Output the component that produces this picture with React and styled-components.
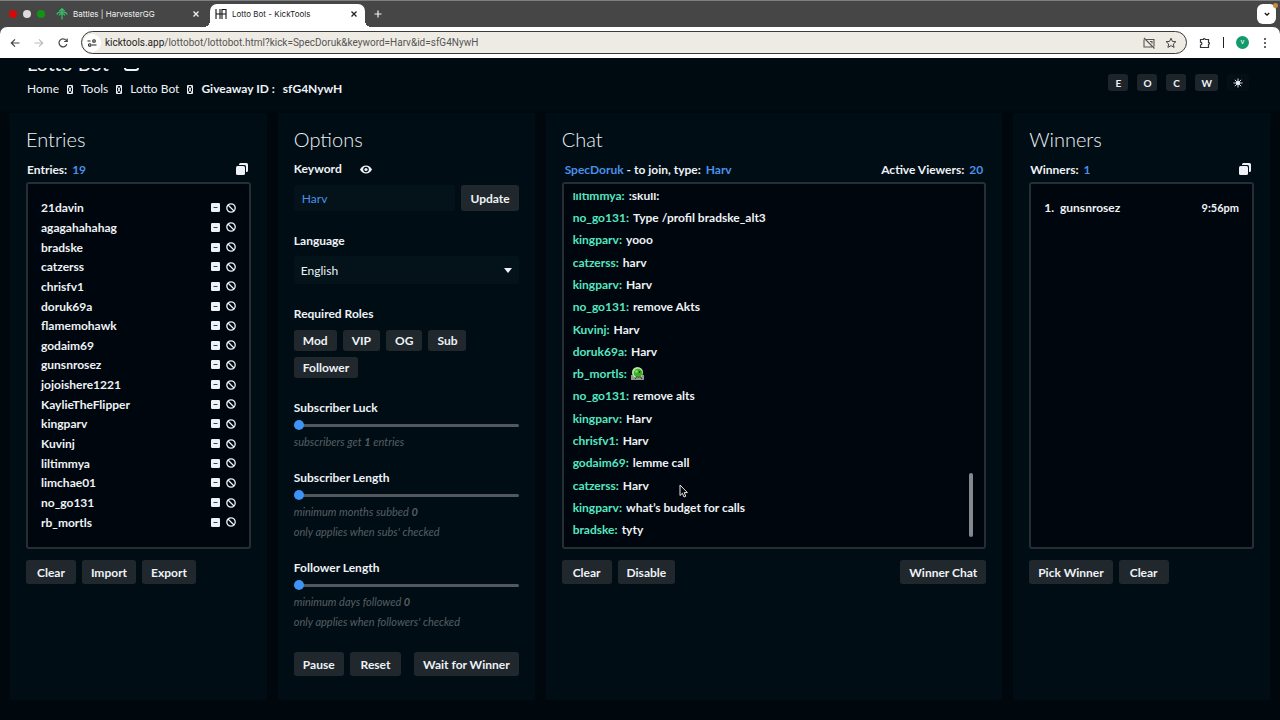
import React, { useState } from 'react';
import styled, { createGlobalStyle } from 'styled-components';

const entries = [
  '21davin', 'agagahahahag', 'bradske', 'catzerss', 'chrisfv1', 'doruk69a',
  'flamemohawk', 'godaim69', 'gunsnrosez', 'jojoishere1221', 'KaylieTheFlipper',
  'kingparv', 'Kuvinj', 'liltimmya', 'limchae01', 'no_go131', 'rb_mortls',
];

const messages = [
  { user: 'liltimmya', text: ':skull:' },
  { user: 'no_go131', text: 'Type /profil bradske_alt3' },
  { user: 'kingparv', text: 'yooo' },
  { user: 'catzerss', text: 'harv' },
  { user: 'kingparv', text: 'Harv' },
  { user: 'no_go131', text: 'remove Akts' },
  { user: 'Kuvinj', text: 'Harv' },
  { user: 'doruk69a', text: 'Harv' },
  { user: 'rb_mortls', emote: true },
  { user: 'no_go131', text: 'remove alts' },
  { user: 'kingparv', text: 'Harv' },
  { user: 'chrisfv1', text: 'Harv' },
  { user: 'godaim69', text: 'lemme call' },
  { user: 'catzerss', text: 'Harv' },
  { user: 'kingparv', text: 'what’s budget for calls' },
  { user: 'bradske', text: 'tyty' },
];

const roles = ['Mod', 'VIP', 'OG', 'Sub', 'Follower'];
const shortcuts = ['E', 'O', 'C', 'W'];

const CloseIcon = () => (
  <svg width="8" height="8" viewBox="0 0 8 8" fill="none" stroke="currentColor" strokeWidth="1.3">
    <path d="M1.5 1.5l5 5M6.5 1.5l-5 5" />
  </svg>
);

const HarvesterLogo = () => (
  <svg width="12" height="12" viewBox="0 0 12 12" fill="none" stroke="#35c46a" strokeWidth="1.2">
    <path d="M6 1v10.500M3.500 3L6 .8 8.500 3M.8 6.500C1.500 4.500 3 3.800 6 3.800s4.500.7 5.200 2.700M3.200 7.500C3.500 6 4.500 5.600 6 5.600s2.500.4 2.800 1.900" />
  </svg>
);

const KickToolsLogo = () => (
  <svg width="12" height="12" viewBox="0 0 12 12" fill="none" stroke="#111" strokeWidth="1.1">
    <path d="M1 1v10M5 1v10M7 1v10M11 1v10M1 6h10M7 1.500h4" />
  </svg>
);

const BackIcon = () => (
  <svg width="12" height="12" viewBox="0 0 12 12" fill="none" stroke="currentColor" strokeWidth="1.2">
    <path d="M10.500 6h-8M6 2.300L2.300 6 6 9.700" />
  </svg>
);

const ForwardIcon = () => (
  <svg width="12" height="12" viewBox="0 0 12 12" fill="none" stroke="currentColor" strokeWidth="1.2">
    <path d="M1.500 6h8M6 2.300L9.700 6 6 9.700" />
  </svg>
);

const ReloadIcon = () => (
  <svg width="12" height="12" viewBox="0 0 12 12" fill="none" stroke="currentColor" strokeWidth="1.2">
    <path d="M9.800 7.200A4 4 0 1 1 9 3.200L10 4.400" />
    <path d="M10.200 1.500v3h-3" />
  </svg>
);

const TuneIcon = () => (
  <svg width="10" height="10" viewBox="0 0 10 10" fill="none" stroke="#222" strokeWidth="1.1">
    <path d="M.5 3h3M5 7h4.500" />
    <circle cx="7" cy="3" r="1.300" />
    <circle cx="2.800" cy="7" r="1.300" />
  </svg>
);

const NoCastIcon = () => (
  <svg width="12" height="12" viewBox="0 0 12 12" fill="none" stroke="#555" strokeWidth="1.1">
    <path d="M3.500 2.500h7.500v7M9 10H1V2.500M1 1l10.500 10.500M7 4.500h2v2" />
  </svg>
);

const StarIcon = () => (
  <svg width="12" height="12" viewBox="0 0 12 12" fill="none" stroke="#444" strokeWidth="1">
    <path d="M6 1.200l1.400 3.200 3.500.3-2.600 2.300.8 3.400L6 8.600l-3.100 1.800.8-3.400L1.100 4.700l3.500-.3z" />
  </svg>
);

const PuzzleIcon = () => (
  <svg width="12" height="12" viewBox="0 0 12 12" fill="none" stroke="#333" strokeWidth="1.200">
    <path d="M1.500 2.500H4.300a1 1 0 0 1 2 0H9.500V5.300a1 1 0 0 1 0 2V10.500H1.500V8a1.400 1.400 0 0 0 0-2.800z" />
  </svg>
);

const DotsIcon = () => (
  <svg width="8" height="12" viewBox="0 0 8 12" fill="#333">
    <circle cx="4" cy="2" r="1" />
    <circle cx="4" cy="6" r="1" />
    <circle cx="4" cy="10" r="1" />
  </svg>
);

// separator glyph between breadcrumb items
const CrumbSeparator = () => (
  <svg width="6" height="9" viewBox="0 0 6 9" fill="none" stroke="currentColor" strokeWidth="1" aria-hidden="true">
    <path d="M.5 .5h5v8h-5zM1 1l4 7M5 1L1 8" />
  </svg>
);

const CopyIcon = () => (
  <svg width="12" height="12" viewBox="0 0 12 12" fill="currentColor">
    <rect x="0" y="3" width="9" height="9" rx="1.500" />
    <path d="M3 2V1.500Q3 0 4.500 0h6Q12 0 12 1.500v6Q12 9 10.500 9H10V3.500Q10 2 8.500 2z" />
  </svg>
);

const EyeIcon = () => (
  <svg width="12" height="9" viewBox="0 0 12 9" fill="none">
    <path d="M0 4.500C1.300 1.800 3.500 .4 6 .4s4.700 1.400 6 4.100C10.700 7.200 8.500 8.600 6 8.600S1.300 7.200 0 4.500z" fill="currentColor" />
    <circle cx="6" cy="4.500" r="2.800" fill="#010c13" />
    <circle cx="6" cy="4.500" r="1.600" fill="currentColor" />
  </svg>
);

const MinusIcon = () => (
  <svg width="9" height="9" viewBox="0 0 9 9">
    <rect width="9" height="9" rx="1.300" fill="currentColor" />
    <path d="M2.500 4.500h4" stroke="#3a4250" strokeWidth="1" />
  </svg>
);

const BanIcon = () => (
  <svg width="10" height="10" viewBox="0 0 10 10" fill="none" stroke="currentColor" strokeWidth="1.300">
    <circle cx="5" cy="5" r="4.200" />
    <path d="M2 2l6 6" />
  </svg>
);

const SunIcon = () => (
  <svg width="10" height="10" viewBox="0 0 10 10" fill="none" stroke="currentColor" strokeWidth="0.900">
    <circle cx="5" cy="5" r="2" fill="currentColor" stroke="none" />
    <path d="M5 .5v9M.5 5h9M1.800 1.800l6.400 6.400M8.200 1.800L1.800 8.200" />
  </svg>
);

const FrogEmote = () => (
  <svg width="13" height="13" viewBox="0 0 13 13" role="img" aria-label="frog">
    <rect x="0" y="8" width="13" height="5" fill="#8f9a8c" />
    <circle cx="6.500" cy="5.500" r="5.500" fill="#b9e8a0" />
    <circle cx="7" cy="6" r="4.300" fill="#3fae2c" />
    <circle cx="5.500" cy="4.500" r="1.300" fill="#86e05a" />
    <circle cx="8.600" cy="5" r=".9" fill="#14480f" />
    <path d="M4 12l2-2.500 1.500 1.500L9 9.500l2 2.500" stroke="#2c3a2a" fill="none" />
  </svg>
);

const SliderOption = ({ id, label, hint, value, note }) => {
  const [amount, setAmount] = useState(value);

  return (
    <div>
      <Label htmlFor={id}>{label}</Label>
      <Slider
        id={id}
        type="range"
        min={value}
        max="100"
        value={amount}
        onChange={(e) => setAmount(Number(e.target.value))}
      />
      <Hint>{hint} <b>{amount}</b>{id === 'luck' ? ' entries' : ''}</Hint>
      {note && <Hint>{note}</Hint>}
    </div>
  );
};

const Browser = () => (
  <header>
    <TabStrip>
      <Lights>
        <Light color="#d40a0a" />
        <Light color="#dcdcdc" />
        <Light color="#129312" />
      </Lights>
      <Tab>
        <HarvesterLogo />
        <TabTitle>Battles | HarvesterGG</TabTitle>
        <IconButton aria-label="Close tab"><CloseIcon /></IconButton>
      </Tab>
      <Tab $active>
        <KickToolsLogo />
        <TabTitle>Lotto Bot - KickTools</TabTitle>
        <IconButton aria-label="Close tab"><CloseIcon /></IconButton>
      </Tab>
      <NewTab aria-label="New tab">
        <svg width="8" height="8" viewBox="0 0 8 8" stroke="currentColor" strokeWidth="1.200"><path d="M4 .5v7M.5 4h7" /></svg>
      </NewTab>
      <TabSearch aria-label="Search tabs">
        <svg width="8" height="8" viewBox="0 0 8 8" fill="none" stroke="#111" strokeWidth="1.300"><path d="M1.800 3L4 5.200 6.200 3" /></svg>
        <UpdateDot />
      </TabSearch>
    </TabStrip>
    <Toolbar>
      <IconButton aria-label="Back"><BackIcon /></IconButton>
      <IconButton aria-label="Forward" $faded><ForwardIcon /></IconButton>
      <IconButton aria-label="Reload"><ReloadIcon /></IconButton>
      <AddressBar>
        <SiteInfo><TuneIcon /></SiteInfo>
        <Url><b>kicktools.app</b>/lottobot/lottobot.html?kick=SpecDoruk&amp;keyword=Harv&amp;id=sfG4NywH</Url>
        <NoCastIcon />
        <StarIcon />
      </AddressBar>
      <ToolbarEnd>
        <PuzzleIcon />
        <Divider />
        <Avatar>v</Avatar>
        <DotsIcon />
      </ToolbarEnd>
    </Toolbar>
  </header>
);

const App = () => {
  const [keyword, setKeyword] = useState('Harv');

  return (
    <Page>
      <GlobalStyle />
      <Browser />
      <PageHeader>
        <div>
          <TitleClip>
            <PageTitle>Lotto Bot</PageTitle>
            <TitleIcon />
          </TitleClip>
          <Breadcrumbs>
            <a href="#home">Home</a>
            <CrumbSeparator />
            <a href="#tools">Tools</a>
            <CrumbSeparator />
            <a href="#lottobot">Lotto Bot</a>
            <CrumbSeparator />
            <b>Giveaway ID :</b>
            <b>sfG4NywH</b>
          </Breadcrumbs>
        </div>
        <Shortcuts>
          {shortcuts.map((key) => <ShortcutButton key={key}>{key}</ShortcutButton>)}
          <ShortcutButton $quiet aria-label="Toggle theme"><SunIcon /></ShortcutButton>
        </Shortcuts>
      </PageHeader>

      <Panels>
        <Panel>
          <PanelTitle>Entries</PanelTitle>
          <InfoRow>
            <span>Entries: <Blue>19</Blue></span>
            <IconButton aria-label="Copy entries"><CopyIcon /></IconButton>
          </InfoRow>
          <Box>
            <EntryList>
              {entries.map((name) => (
                <Entry key={name}>
                  <EntryName>{name}</EntryName>
                  <IconButton aria-label={`Remove ${name}`}><MinusIcon /></IconButton>
                  <IconButton aria-label={`Ban ${name}`}><BanIcon /></IconButton>
                </Entry>
              ))}
            </EntryList>
          </Box>
          <ButtonRow>
            <Button $wide>Clear</Button>
            <Button>Import</Button>
            <Button>Export</Button>
          </ButtonRow>
        </Panel>

        <Panel>
          <PanelTitle>Options</PanelTitle>
          <Options>
            <div>
              <KeywordLabel>
                <Label htmlFor="keyword">Keyword</Label>
                <IconButton aria-label="Show keyword"><EyeIcon /></IconButton>
              </KeywordLabel>
              <Field>
                <TextInput id="keyword" value={keyword} onChange={(e) => setKeyword(e.target.value)} />
                <UpdateButton>Update</UpdateButton>
              </Field>
            </div>
            <div>
              <Label htmlFor="language">Language</Label>
              <SelectWrap>
                <Select id="language" defaultValue="English">
                  <option>English</option>
                </Select>
                <Caret />
              </SelectWrap>
            </div>
            <div>
              <Label as="div">Required Roles</Label>
              <Roles>
                {roles.map((role) => <RoleButton key={role}>{role}</RoleButton>)}
              </Roles>
            </div>
            <Sliders>
              <SliderOption id="luck" label="Subscriber Luck" hint="subscribers get" value={1} />
              <SliderOption
                id="sublength"
                label="Subscriber Length"
                hint="minimum months subbed"
                value={0}
                note="only applies when subs' checked"
              />
              <SliderOption
                id="followlength"
                label="Follower Length"
                hint="minimum days followed"
                value={0}
                note="only applies when followers' checked"
              />
            </Sliders>
            <Actions>
              <Button>Pause</Button>
              <Button $wide>Reset</Button>
              <Button $end>Wait for Winner</Button>
            </Actions>
          </Options>
        </Panel>

        <Panel>
          <PanelTitle>Chat</PanelTitle>
          <InfoRow>
            <span><Blue>SpecDoruk</Blue> - to join, type: <Blue>Harv</Blue></span>
            <span>Active Viewers: <Blue>20</Blue></span>
          </InfoRow>
          <Box>
            <ChatViewport>
              <ChatList>
                {messages.map((message, index) => (
                  <Message key={index}>
                    <ChatUser>{message.user}:</ChatUser>
                    {message.emote ? <FrogEmote /> : <span>{message.text}</span>}
                  </Message>
                ))}
              </ChatList>
            </ChatViewport>
            <ScrollThumb />
            <Pointer width="9" height="14" viewBox="0 0 9 14">
              <path d="M1 1v10.500l2.400-2.200L5 13l1.800-.8-1.600-3.600h3.200z" fill="#05080c" stroke="#e8e8e8" strokeWidth="1" />
            </Pointer>
          </Box>
          <ButtonRow>
            <Button $wide>Clear</Button>
            <Button>Disable</Button>
            <Button $end>Winner Chat</Button>
          </ButtonRow>
        </Panel>

        <Panel>
          <PanelTitle>Winners</PanelTitle>
          <InfoRow>
            <span>Winners: <Blue>1</Blue></span>
            <IconButton aria-label="Copy winners"><CopyIcon /></IconButton>
          </InfoRow>
          <Box>
            <Winner>
              <span>1.</span>
              <EntryName>gunsnrosez</EntryName>
              <Time>9:56pm</Time>
            </Winner>
          </Box>
          <ButtonRow>
            <Button>Pick Winner</Button>
            <Button $wide>Clear</Button>
          </ButtonRow>
        </Panel>
      </Panels>
    </Page>
  );
};

export default App;

const GlobalStyle = createGlobalStyle`
  * {
    box-sizing: border-box;
  }
  body {
    margin: 0;
    background: #00080e;
    color: #eef2f6;
    font-family: Lato, "Liberation Sans", sans-serif;
    font-size: 12px;
  }
  button, input, select {
    font: inherit;
    color: inherit;
    border: 0;
    margin: 0;
  }
  ul, ol {
    list-style: none;
    margin: 0;
    padding: 0;
  }
  svg {
    display: block;
    flex: none;
  }
`;

const Page = styled.div`
  display: flex;
  flex-direction: column;
  min-height: 100vh;
`;

const TabStrip = styled.div`
  display: flex;
  align-items: flex-end;
  height: 27px;
  padding: 0 4px 0 9px;
  background: #464646;
  border-top: 1px solid #7d7f80;
  font-family: Inter, sans-serif;
`;

const Lights = styled.div`
  display: flex;
  gap: 6px;
  align-self: center;
  width: 40px;
`;

const Light = styled.span`
  width: 8px;
  height: 8px;
  border-radius: 50%;
  background: ${({ color }) => color};
`;

const IconButton = styled.button`
  display: flex;
  align-items: center;
  justify-content: center;
  padding: 0;
  background: none;
  opacity: ${({ $faded }) => ($faded ? 0.35 : 1)};
`;

const Tab = styled.div`
  position: relative;
  display: flex;
  align-items: center;
  gap: 5px;
  width: ${({ $active }) => ($active ? '155px' : '161px')};
  height: 23px;
  padding: 0 ${({ $active }) => ($active ? '7px 4px 5px' : '10px 4px 7px')};
  color: ${({ $active }) => ($active ? '#222' : '#f2f2f2')};
  background: ${({ $active }) => ($active ? '#fff' : 'none')};
  border-radius: 7px 7px 0 0;

  /* flared feet of the selected tab */
  &::before,
  &::after {
    content: '';
    display: ${({ $active }) => ($active ? 'block' : 'none')};
    position: absolute;
    bottom: 0;
    width: 6px;
    height: 6px;
  }
  &::before {
    right: 100%;
    background: radial-gradient(circle at 0 0, transparent 6px, #fff 6px);
  }
  &::after {
    left: 100%;
    background: radial-gradient(circle at 100% 0, transparent 6px, #fff 6px);
  }
`;

const TabTitle = styled.span`
  flex: 1;
  font-size: 8px;
  white-space: nowrap;
`;

const NewTab = styled(IconButton)`
  width: 26px;
  height: 26px;
  color: #f2f2f2;
`;

const TabSearch = styled(IconButton)`
  position: relative;
  width: 19px;
  height: 20px;
  margin: 0 0 3px auto;
  border-radius: 6px;
  background: #fff;
`;

const UpdateDot = styled.span`
  position: absolute;
  top: -1px;
  right: -2px;
  width: 5px;
  height: 5px;
  border-radius: 50%;
  background: #c98a3c;
`;

const Toolbar = styled.div`
  display: flex;
  align-items: center;
  gap: 12px;
  height: 31px;
  padding: 0 11px 0 9px;
  background: #fff;
  box-shadow: 0 -6px 0 #464646;
  border-radius: 7px 7px 0 0;
  color: #444;
  font-family: Roboto, sans-serif;
  clip-path: inset(0);
`;

const AddressBar = styled.div`
  display: flex;
  flex: 1;
  align-items: center;
  gap: 10px;
  height: 23px;
  padding: 0 9px 0 1px;
  border: 1px solid #3a3a3a;
  border-radius: 12px;
  background: #eeebe4;
`;

const SiteInfo = styled.span`
  display: grid;
  place-items: center;
  width: 18px;
  height: 18px;
  border-radius: 50%;
  background: #fff;
`;

const Url = styled.span`
  flex: 1;
  margin-left: -6px;
  font-size: 10px;
  color: #555;

  b {
    font-weight: 400;
    color: #222;
  }
`;

const ToolbarEnd = styled.div`
  display: flex;
  align-items: center;
  gap: 12px;
`;

const Divider = styled.span`
  width: 1px;
  height: 11px;
  background: #222;
`;

const Avatar = styled.span`
  width: 13px;
  height: 13px;
  border-radius: 50%;
  background: #129a6c;
  color: #fff;
  font-size: 8px;
  line-height: 12px;
  text-align: center;
`;

const PageHeader = styled.div`
  display: flex;
  justify-content: space-between;
  padding: 10px 31px 12px 27px;
  background: #000a11;
`;

// the page is scrolled, only the foot of the title is left in view
const TitleClip = styled.div`
  display: flex;
  align-items: flex-end;
  gap: 15px;
  height: 4px;
  overflow: hidden;
`;

const PageTitle = styled.h1`
  margin: 0;
  font-size: 20px;
  font-weight: 400;
  line-height: 18px;
`;

const TitleIcon = styled.span`
  width: 15px;
  height: 15px;
  margin-bottom: 1px;
  border: 2px solid #eef2f6;
  border-radius: 3px;
`;

const Breadcrumbs = styled.nav`
  display: flex;
  align-items: center;
  gap: 8px;
  margin-top: 7px;
  font-size: 12px;
  line-height: 20px;

  a {
    color: inherit;
    text-decoration: none;
  }
`;

const Shortcuts = styled.div`
  display: flex;
  align-items: flex-start;
  gap: 9px;
  margin-top: 6px;
`;

const ShortcutButton = styled.button`
  display: grid;
  place-items: center;
  min-width: 20px;
  height: 17px;
  padding: 0 6px;
  border-radius: 3px;
  background: ${({ $quiet }) => ($quiet ? '#030e15' : '#1d252b')};
  font-size: 10px;
  font-weight: 700;
`;

const Panels = styled.main`
  display: grid;
  flex: 1;
  grid-template-columns: 9fr 9fr 16fr 9fr;
  gap: 11px;
  padding: 2px 10px 20px;
`;

const Panel = styled.section`
  min-width: 0;
  padding: 14px 16px;
  background: #010d14;
`;

const PanelTitle = styled.h2`
  margin: 0 0 8px;
  font-size: 20px;
  font-weight: 300;
  line-height: 24px;
`;

const InfoRow = styled.div`
  display: flex;
  align-items: center;
  justify-content: space-between;
  height: 20px;
  padding: 0 3px 0 1px;
  font-weight: 700;
`;

const Blue = styled.span`
  color: #4a90e8;
  margin-left: 2px;
`;

const Box = styled.div`
  position: relative;
  height: 367px;
  margin-top: 3px;
  border: 2px solid #272e33;
  border-radius: 3px;
  background: #00060d;
  font-weight: 700;
`;

const EntryList = styled.ul`
  display: grid;
  grid-auto-rows: 1fr;
  height: 334px;
  margin: 14px 13px 0;
`;

const Entry = styled.li`
  display: flex;
  align-items: center;
  gap: 6px;
`;

const EntryName = styled.span`
  flex: 1;
`;

const Winner = styled.div`
  display: flex;
  align-items: center;
  gap: 6px;
  margin: 14px 13px 0;
  line-height: 20px;
`;

const Time = styled.time`
  font-size: 11px;
`;

const ChatViewport = styled.div`
  display: flex;
  flex-direction: column;
  justify-content: flex-end;
  height: 348px;
  margin: 9px 9px 0;
  overflow: hidden;
`;

const ChatList = styled.ol`
  display: grid;
  flex: none;
  grid-auto-rows: 1fr;
  height: 357px;
`;

const Message = styled.li`
  display: flex;
  align-items: center;
  gap: 4px;
`;

const ChatUser = styled.span`
  color: #55e6c1;
`;

const ScrollThumb = styled.div`
  position: absolute;
  right: 11px;
  bottom: 10px;
  width: 4px;
  height: 64px;
  border-radius: 2px;
  background: #85888c;
`;

const Pointer = styled.svg`
  position: absolute;
  left: 115px;
  top: 300px;
`;

const ButtonRow = styled.div`
  display: flex;
  gap: 6px;
  margin-top: 11px;
`;

const Button = styled.button`
  height: 24px;
  padding: 0 ${({ $wide }) => ($wide ? '11px' : '9px')};
  margin-left: ${({ $end }) => ($end ? 'auto' : '0')};
  border-radius: 3px;
  background: #20282d;
  font-weight: 700;
  white-space: nowrap;
`;

const UpdateButton = styled(Button)`
  height: 26px;
`;

const RoleButton = styled(Button)`
  height: 21px;
`;

const Options = styled.div`
  display: flex;
  flex-direction: column;
  gap: 20px;
`;

const Label = styled.label`
  display: block;
  font-weight: 700;
  line-height: 20px;
`;

const KeywordLabel = styled.div`
  display: flex;
  align-items: center;
  gap: 18px;
`;

const Field = styled.div`
  display: flex;
  gap: 6px;
  margin-top: 6px;
`;

const TextInput = styled.input`
  flex: 1;
  min-width: 0;
  padding: 0 8px;
  border-radius: 3px;
  background: #04131a;
  color: #4a90e8;
`;

const SelectWrap = styled.div`
  position: relative;
  margin-top: 5px;
`;

const Select = styled.select`
  appearance: none;
  width: 100%;
  height: 28px;
  padding: 0 7px;
  border-radius: 3px;
  background: #04131a;
`;

const Caret = styled.span`
  position: absolute;
  right: 7px;
  top: 12px;
  border: 4px solid transparent;
  border-top: 5px solid #eef2f6;
  border-bottom: 0;
  pointer-events: none;
`;

const Roles = styled.div`
  display: flex;
  flex-wrap: wrap;
  gap: 6px;
  margin-top: 6px;
`;

const Sliders = styled.div`
  display: flex;
  flex-direction: column;
  gap: 16px;
`;

const Slider = styled.input`
  appearance: none;
  display: block;
  width: 100%;
  height: 12px;
  margin: 1px 0;
  background: none;

  &::-webkit-slider-runnable-track {
    height: 3px;
    border-radius: 2px;
    background: #53585e;
  }
  &::-webkit-slider-thumb {
    appearance: none;
    width: 10px;
    height: 10px;
    margin-top: -4px;
    border-radius: 50%;
    background: #3b94f6;
  }
`;

const Hint = styled.p`
  margin: 0;
  color: #555d63;
  font-style: italic;
  font-size: 11px;
  line-height: 20px;
`;

const Actions = styled.div`
  display: flex;
  gap: 6px;
`;
